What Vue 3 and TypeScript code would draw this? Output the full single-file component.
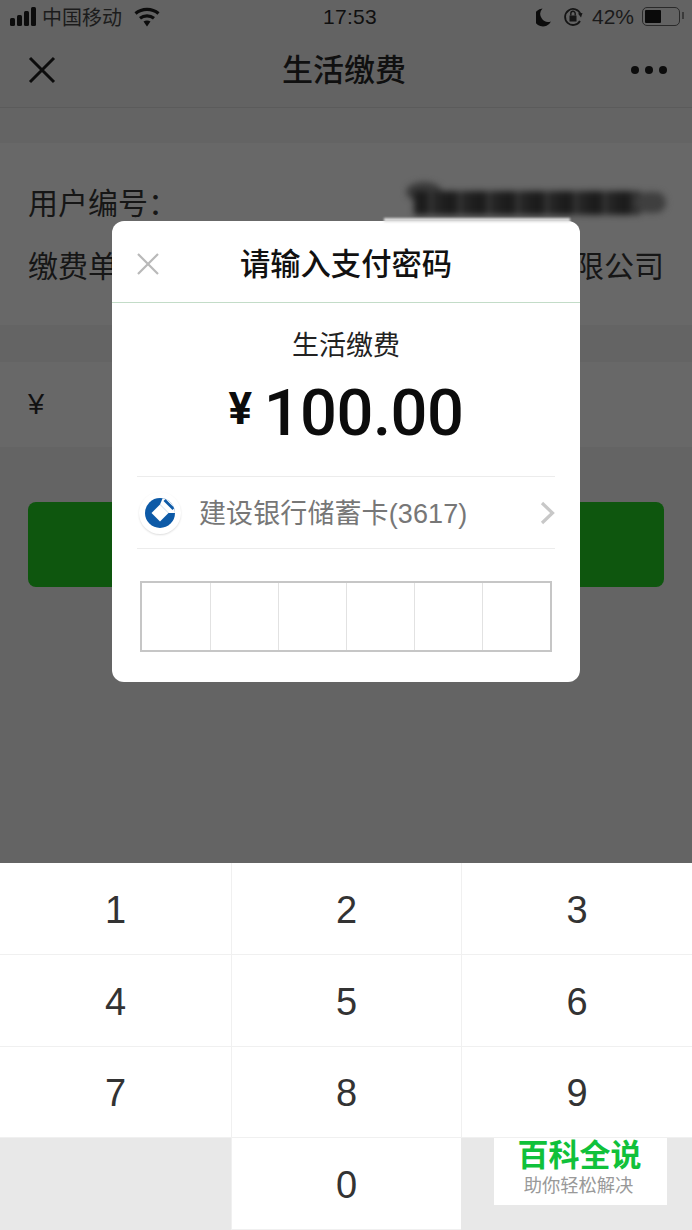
<template>
  <div class="screen">
    <div class="upper">
      <div class="status">
        <div class="status-left">
          <span class="signal"><i v-for="h in signalBars" :key="h" :style="{ height: h + 'px' }"></i></span>
          <span class="carrier">中国移动</span>
          <svg class="wifi" width="26" height="20" viewBox="0 0 26 20">
            <path d="M1.5 6.5C8 1 18 1 24.5 6.5" fill="none" stroke="#0c0c0c" stroke-width="3.2" />
            <path d="M6 11.2C10 8 16 8 20 11.2" fill="none" stroke="#0c0c0c" stroke-width="3.2" />
            <path d="M9.5 14.6C11.6 13 14.4 13 16.5 14.6L13 19.5Z" fill="#0c0c0c" />
          </svg>
        </div>
        <span class="time">17:53</span>
        <div class="status-right">
          <svg width="16" height="20" viewBox="0 0 16 20">
            <path d="M6.5 1.5A9 9 0 1 0 15 14.5 8 8 0 0 1 6.5 1.5Z" fill="#0c0c0c" />
          </svg>
          <svg class="lock" width="20" height="22" viewBox="0 0 20 22">
            <path d="M17.5 8A8 8 0 1 0 17 15" fill="none" stroke="#151515" stroke-width="1.8" />
            <path d="M15 7.5L19.5 7 18 11.5Z" fill="#151515" />
            <rect x="6.5" y="9.5" width="7" height="6" fill="#151515" />
            <path d="M7.8 9.5V7.5a2.2 2.2 0 0 1 4.4 0v2" fill="none" stroke="#151515" stroke-width="1.4" />
          </svg>
          <span class="percent">42%</span>
          <span class="battery"><i></i></span>
        </div>
      </div>

      <div class="nav">
        <svg width="28" height="28" viewBox="0 0 28 28">
          <path d="M2 2L26 26M26 2L2 26" stroke="#0c0c0c" stroke-width="3" fill="none" />
        </svg>
        <span class="nav-title">生活缴费</span>
        <span class="dots"><i></i><i></i><i></i></span>
      </div>

      <div class="card info">
        <div class="info-row">
          <span>用户编号：</span>
        </div>
        <div class="info-row">
          <span>缴费单位：</span>
          <span>自来水有限公司</span>
        </div>
      </div>

      <div class="card amount">¥</div>

      <div class="pay-btn"></div>

      <!-- pixelated user number, sits over the row -->
      <div class="smudge">
        <i class="smudge-blob"></i>
        <i class="smudge-bar"></i>
        <i class="smudge-tail"></i>
      </div>

      <div class="modal">
        <div class="modal-head">
          <svg class="modal-close" width="22" height="22" viewBox="0 0 22 22">
            <path d="M1 1L21 21M21 1L1 21" stroke="#b9b9b9" stroke-width="2.2" fill="none" />
          </svg>
          <span>请输入支付密码</span>
        </div>
        <div class="modal-body">
          <div class="pay-name">生活缴费</div>
          <div class="pay-amount"><span class="yen">¥</span>100.00</div>
          <div class="bank">
            <span class="bank-logo">
              <svg width="32" height="32" viewBox="0 0 32 32">
                <defs>
                  <clipPath id="ccb-disc"><circle cx="16" cy="16" r="15" /></clipPath>
                </defs>
                <g clip-path="url(#ccb-disc)">
                  <rect width="32" height="32" fill="#0d5aa7" />
                  <path d="M16 7.5L24.5 16H32V10L20 -2Z" fill="#fff" />
                  <path d="M21.5 2L30.5 11 28.5 13 19.5 4Z" fill="#0d5aa7" />
                  <path d="M16 7.5L24.5 16 16 24.5 7.5 16Z" fill="#fff" />
                </g>
              </svg>
            </span>
            <span class="bank-name">建设银行储蓄卡(3617)</span>
            <svg class="chevron" width="15" height="24" viewBox="0 0 15 24">
              <path d="M2 2L12.5 12 2 22" fill="none" stroke="#c8c8c8" stroke-width="3.2" />
            </svg>
          </div>
          <div class="pin">
            <span v-for="n in 6" :key="n"></span>
          </div>
        </div>
      </div>
      <div class="modal-smear"></div>
    </div>

    <div class="keyboard">
      <div v-for="k in keys" :key="k.id" class="key" :class="{ blank: !k.label }">{{ k.label }}</div>
      <div class="watermark">
        <strong>百科全说</strong>
        <span>助你轻松解决</span>
      </div>
    </div>
  </div>
</template>

<script setup lang="ts">
const signalBars = [8, 11, 15, 19]

const keys = ['1', '2', '3', '4', '5', '6', '7', '8', '9', '', '0', ''].map((label, id) => ({ id, label }))
</script>

<style>
body { background: #646464; }
</style>

<style scoped>
.screen {
  width: 692px;
  height: 1230px;
  overflow: hidden;
  display: flex;
  flex-direction: column;
  font-family: "Liberation Sans", "Noto Sans CJK SC", sans-serif;
}
.upper {
  position: relative;
  height: 863px;
  background: #646464;
  color: #101010;
}
.status {
  height: 36px;
  box-sizing: border-box;
  padding: 0 10px 3px;
  background: #636363;
  display: flex;
  align-items: center;
  justify-content: space-between;
  position: relative;
}
.status-left, .status-right { display: flex; align-items: center; }
.signal { display: flex; align-items: flex-end; gap: 2px; width: 28px; height: 19px; }
.signal i { width: 5px; background: #0c0c0c; border-radius: 1.5px; }
.carrier { margin-left: 4px; font-size: 20px; color: #1c1c1c; }
.wifi { margin-left: 12px; }
.time { position: absolute; left: 323px; top: 2px; font-size: 21px; line-height: 30px; letter-spacing: 0.3px; }
.status-right { gap: 8px; padding-right: 2px; }
.lock { margin-left: 3px; }
.percent { margin-left: 1px; font-size: 21px; color: #1a1a1a; }
.battery {
  position: relative;
  box-sizing: border-box;
  width: 38px;
  height: 19px;
  border: 1.5px solid #2a2a2a;
  border-radius: 5px;
  padding: 2px;
}
.battery::after {
  content: "";
  position: absolute;
  right: -5px;
  top: 4px;
  width: 2px;
  height: 7px;
  background: #3a3a3a;
}
.battery i { display: block; width: 16px; height: 100%; background: #0a0a0a; border-radius: 1px; }
.nav {
  height: 72px;
  box-sizing: border-box;
  padding: 0 25px 4px 28px;
  background: #636363;
  border-bottom: 1px solid #5b5b5b;
  display: flex;
  align-items: center;
  justify-content: space-between;
  position: relative;
}
.nav-title {
  position: absolute;
  left: 0;
  right: 4px;
  top: 0;
  line-height: 70px;
  text-align: center;
  font-size: 31px;
  font-weight: 500;
}
.dots { display: flex; gap: 6px; }
.dots i { width: 8px; height: 8px; border-radius: 50%; background: #0c0c0c; }
.card { background: #686868; padding: 0 28px; }
.info { margin-top: 35px; height: 182px; padding-top: 34px; box-sizing: border-box; }
.info-row {
  display: flex;
  justify-content: space-between;
  align-items: center;
  height: 48px;
  margin-bottom: 15px;
  font-size: 30px;
  color: #161616;
}
.amount {
  margin-top: 37px;
  height: 85px;
  line-height: 85px;
  font-size: 29px;
  color: #111;
}
.pay-btn {
  margin: 55px 28px 0;
  height: 85px;
  border-radius: 8px;
  background: #0e560e;
}
.smudge { position: absolute; left: 400px; top: 178px; width: 270px; height: 44px; filter: blur(3px); }
.smudge i { position: absolute; display: block; }
.smudge-blob { left: 6px; top: 4px; width: 36px; height: 20px; border-radius: 50%; background: #3a3a3a; }
.smudge-bar {
  left: 14px;
  top: 13px;
  width: 226px;
  height: 24px;
  background: repeating-linear-gradient(90deg, #1c1c1c 0 14px, #333 14px 20px, #232323 20px 29px);
}
.smudge-tail { left: 236px; top: 14px; width: 30px; height: 21px; border-radius: 10px; background: #3f3f3f; }
.modal {
  position: absolute;
  left: 112px;
  top: 221px;
  width: 468px;
  height: 461px;
  background: #fff;
  border-radius: 12px;
  overflow: hidden;
}
.modal-smear {
  position: absolute;
  left: 384px;
  top: 218px;
  width: 186px;
  height: 4px;
  background: #ddd;
  filter: blur(1px);
}
.modal-head {
  position: relative;
  height: 81px;
  border-bottom: 1px solid #c3dcc8;
  display: flex;
  align-items: center;
  justify-content: center;
  font-size: 30.3px;
  font-weight: 500;
  color: #111;
}
.modal-close { position: absolute; left: 25px; top: 32px; }
.modal-body { padding: 0 25px; }
.pay-name {
  margin-top: 24px;
  text-align: center;
  font-size: 27px;
  line-height: 38px;
  color: #222;
}
.pay-amount {
  margin-top: 8px;
  height: 84px;
  box-sizing: border-box;
  padding-bottom: 5px;
  display: flex;
  justify-content: center;
  align-items: center;
  font-family: Roboto, "Liberation Sans", sans-serif;
  font-size: 65px;
  font-weight: 500;
  letter-spacing: -0.5px;
  color: #0c0c0c;
}
.yen { font-size: 44px; margin-right: 12px; margin-top: -8px; font-weight: 700; }
.bank {
  margin-top: 19px;
  height: 71px;
  border-top: 1px solid #ececec;
  border-bottom: 1px solid #ececec;
  display: flex;
  align-items: center;
}
.bank-logo {
  width: 42px;
  height: 42px;
  margin-left: 2px;
  border-radius: 50%;
  box-shadow: 0 1px 2px #ddd;
  display: flex;
  align-items: center;
  justify-content: center;
}
.bank-name { margin-left: 18px; padding-bottom: 3px; flex: 1; font-size: 27px; letter-spacing: 0.1px; color: #777; }
.pin {
  margin: 32px 3px 0;
  height: 71px;
  box-sizing: border-box;
  border: 2px solid #c6c6c6;
  display: grid;
  grid-template-columns: repeat(6, 1fr);
}
.pin span { border-left: 1px solid #e2e2e2; }
.pin span:first-child { border-left: 0; }
.keyboard {
  position: relative;
  flex: 1;
  display: grid;
  grid-template-columns: 231px 230px 231px;
  grid-template-rows: repeat(4, 1fr);
  background: #fff;
}
.key {
  display: flex;
  align-items: center;
  justify-content: center;
  padding-top: 4px;
  border-left: 1px solid #f0f0f0;
  border-bottom: 1px solid #f0f0f0;
  font-size: 38px;
  color: #333;
}
.key:nth-child(3n + 1) { border-left: 0; }
.key.blank { background: #e8e8e8; border: 0; padding: 0; }
.watermark {
  position: absolute;
  left: 494px;
  top: 275px;
  width: 173px;
  height: 67px;
  background: #fff;
  display: flex;
  flex-direction: column;
  align-items: center;
  line-height: 1;
}
.watermark strong { margin-top: 0; margin-right: 2px; font-size: 31px; line-height: 36px; font-weight: 700; color: #10c13a; }
.watermark span { margin-right: 4px; font-size: 18.3px; line-height: 24px; color: #999; }
</style>
